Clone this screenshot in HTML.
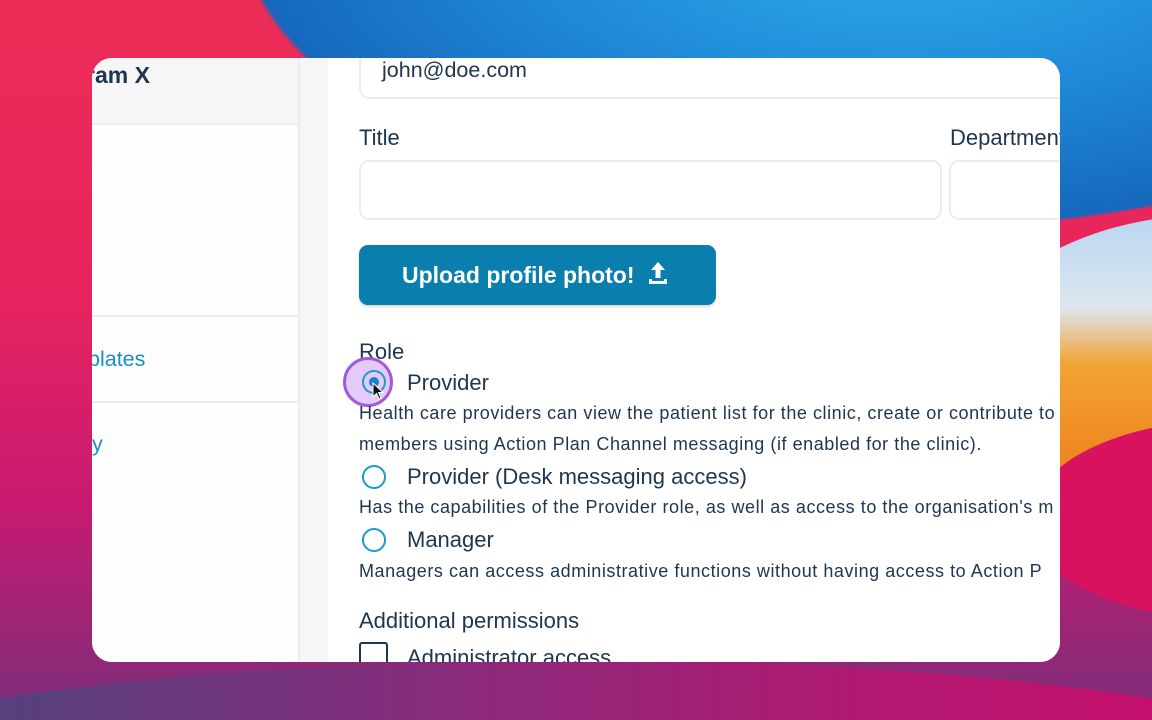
<!DOCTYPE html>
<html><head><meta charset="utf-8"><style>
*{margin:0;padding:0;box-sizing:border-box}
html,body{width:1152px;height:720px;overflow:hidden}
body{font-family:"Liberation Sans",sans-serif;color:#1f3550;position:relative;
background:
radial-gradient(ellipse 660px 300px at 900px -70px,#30b0ec 0%,#1e86d6 60%,#1668bc 99%,rgba(0,0,0,0) 100%),
linear-gradient(180deg,#ec2c55 0%,#e8245e 40%,#c81a70 70%,#7a2e7a 100%);}
.or{position:absolute;left:960px;top:215px;width:192px;height:330px;clip-path:ellipse(250px 165px at 250px 165px);background:linear-gradient(180deg,#b8d6f2 0%,#dde6f0 28%,#f2a436 45%,#f08a22 70%,#ee7a20 100%)}
.pk{position:absolute;left:1030px;top:420px;width:122px;height:200px;clip-path:ellipse(200px 100px at 200px 100px);background:#d8125f}
.bt{position:absolute;left:0;top:640px;width:1152px;height:80px;clip-path:ellipse(900px 165px at 576px 185px);background:linear-gradient(90deg,#55407e,#8a2a7a 40%,#b01872 75%,#c4106c)}
.card{position:absolute;left:92px;top:58px;width:968px;height:604px;border-radius:20px;overflow:hidden;background:#f6f6f6}
.side{position:absolute;left:0;top:0;width:208px;height:604px;background:#fdfdfd;border-right:2px solid #ececec}
.side .hd{height:67px;background:#f6f6f6;border-bottom:2px solid #ececec;font-weight:bold;font-size:23px;padding-top:4px;text-indent:-6px}
.side .hr{position:absolute;left:0;top:257px;width:208px;height:2px;background:#ececec}
.side .hr2{position:absolute;left:0;top:343px;width:208px;height:2px;background:#ececec}
.main{position:absolute;left:236px;top:0;width:732px;height:604px;background:#fff;overflow:hidden}
.abs{position:absolute;white-space:nowrap}
.inp{position:absolute;border:2px solid #ececec;border-radius:10px;background:#fff}
.lbl{font-size:22px;color:#1f3550}
.desc{font-size:18px;letter-spacing:.55px;color:#1f3550}
.radio{position:absolute;width:24px;height:24px;border:2px solid #1a9bd0;border-radius:50%}
</style></head><body>
<div class="or"></div><div class="pk"></div><div class="bt"></div>
<div class="card">
 <div class="side">
  <div class="hd">ram X</div>
  <div class="hr"></div>
  <div class="abs" style="left:0;top:289px;font-size:21.5px;color:#1a8ec4;text-indent:-4px">plates</div>
  <div class="hr2"></div>
  <div class="abs" style="left:0;top:374px;font-size:21.5px;color:#1a8ec4">y</div>
 </div>
 <div class="main">
  <div class="inp" style="left:31px;top:-20px;width:701px;height:61px;border-right:none;border-radius:10px 0 0 10px"></div>
  <div class="abs" style="left:54px;top:0px;font-size:21.5px">john@doe.com</div>
  <div class="abs lbl" style="left:31px;top:67px">Title</div>
  <div class="abs lbl" style="left:622px;top:67px">Department</div>
  <div class="inp" style="left:31px;top:102px;width:583px;height:60px"></div>
  <div class="inp" style="left:621px;top:102px;width:111px;height:60px;border-right:none;border-radius:10px 0 0 10px"></div>
  <div class="abs" style="left:31px;top:187px;width:357px;height:60px;background:#0a7fae;border-radius:9px;color:#fff;font-weight:bold;font-size:23px;line-height:60px;padding-left:43px;box-shadow:0 2px 2px rgba(0,0,0,.15)">Upload profile photo!
   <svg width="22" height="26" viewBox="0 0 22 26" style="vertical-align:-3px;margin-left:6px"><path d="M11 2 L4 10 H8.5 V18 H13.5 V10 H18 Z M2 19 V24 H20 V19 H17 V21 H5 V19 Z" fill="#fff"/></svg>
  </div>
  <div class="abs lbl" style="left:31px;top:281px">Role</div>
  <div class="abs" style="left:15px;top:299px;width:50px;height:50px;border-radius:50%;background:rgba(200,150,240,.5);border:3px solid #a35ad8"></div>
  <div class="radio" style="left:34px;top:312px"></div>
  <div class="abs" style="left:41px;top:319px;width:10px;height:10px;border-radius:50%;background:#1a80d0"></div>
  <svg class="abs" style="left:44px;top:324px" width="12" height="20" viewBox="0 0 12 20"><path d="M1 1 V15 L4.5 11.5 L7 17 L9 16 L6.5 10.5 H11 Z" fill="#111" stroke="#fff" stroke-width="1"/></svg>
  <div class="abs lbl" style="left:79px;top:312px">Provider</div>
  <div class="abs desc" style="left:31px;top:345px">Health care providers can view the patient list for the clinic, create or contribute to</div>
  <div class="abs desc" style="left:31px;top:376px">members using Action Plan Channel messaging (if enabled for the clinic).</div>
  <div class="radio" style="left:34px;top:407px"></div>
  <div class="abs lbl" style="left:79px;top:406px">Provider (Desk messaging access)</div>
  <div class="abs desc" style="left:31px;top:439px">Has the capabilities of the Provider role, as well as access to the organisation's m</div>
  <div class="radio" style="left:34px;top:470px"></div>
  <div class="abs lbl" style="left:79px;top:469px">Manager</div>
  <div class="abs desc" style="left:31px;top:503px">Managers can access administrative functions without having access to Action P</div>
  <div class="abs lbl" style="left:31px;top:550px">Additional permissions</div>
  <div class="abs" style="left:31px;top:584px;width:29px;height:20px;border:2.5px solid #1f3550;border-bottom:none;border-radius:3px 3px 0 0"></div>
  <div class="abs lbl" style="left:79px;top:587px;height:17px;overflow:hidden">Administrator access</div>
 </div>
</div>
</body></html>
